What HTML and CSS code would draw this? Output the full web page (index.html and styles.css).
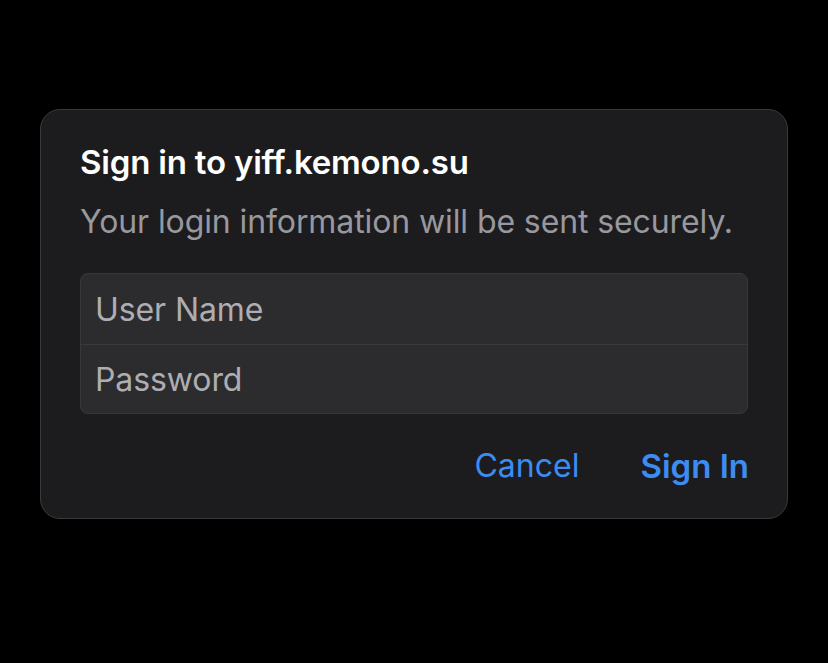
FILE: index.html
```html
<!DOCTYPE html>
<html>
<head>
<meta charset="utf-8">
<link rel="stylesheet" href="styles.css">
</head>
<body>
<div class="dialog">
  <div class="title">Sign in to yiff.kemono.su</div>
  <div class="subtitle">Your login information will be sent securely.</div>
  <div class="fields">
    <div class="field">User Name</div>
    <div class="field">Password</div>
  </div>
  <div class="actions">
    <span class="btn">Cancel</span>
    <span class="btn primary">Sign In</span>
  </div>
</div>
</body>
</html>
```
FILE: styles.css
```css
html, body {
  margin: 0;
  padding: 0;
  background: #000;
  width: 828px;
  height: 663px;
  overflow: hidden;
  font-family: Inter, "Noto Sans", sans-serif;
}
body {
  padding-top: 109px;
  padding-left: 40px;
  box-sizing: border-box;
}
.dialog {
  width: 748px;
  height: 410px;
  box-sizing: border-box;
  background: #1c1c1e;
  border: 1px solid #3a3a3c;
  border-radius: 20px;
  padding: 32px 39px 0 39px;
}
.title {
  color: #fff;
  font-weight: 600;
  font-size: 33px;
  line-height: 40px;
  letter-spacing: -0.2px;
}
.subtitle {
  color: #98989e;
  font-size: 32px;
  line-height: 40px;
  margin-top: 20px;
  letter-spacing: -0.1px;
}
.fields {
  margin-top: 31px;
  background: #2c2c2e;
  border: 1px solid #38383a;
  border-radius: 8px;
  overflow: hidden;
}
.field {
  height: 70px;
  box-sizing: border-box;
  padding-left: 14px;
  display: flex;
  align-items: center;
  color: #aeaeb2;
  font-size: 32px;
  letter-spacing: -0.1px;
}
.field + .field {
  height: 69px;
  border-top: 1px solid #3a3a3c;
}
.actions {
  display: flex;
  justify-content: flex-end;
  gap: 61px;
  margin-top: 32px;
  margin-right: -1px;
}
.btn {
  color: #3c8cf2;
  font-size: 32px;
  line-height: 40px;
}
.btn.primary {
  font-size: 33px;
  font-weight: 600;
}
```
